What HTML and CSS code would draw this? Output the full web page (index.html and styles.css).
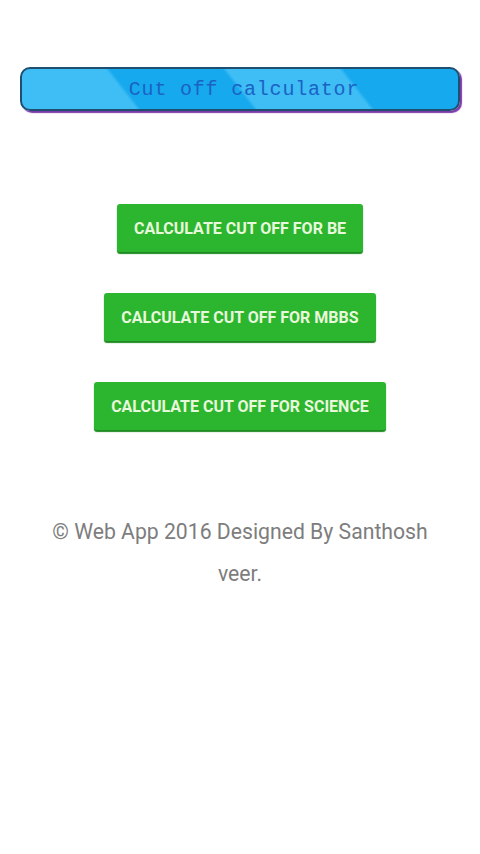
FILE: index.html
```html
<!DOCTYPE html>
<html lang="en">
<head>
<meta charset="UTF-8" />
<meta name="viewport" content="width=device-width, initial-scale=1" />
<title>Cut off calculator</title>
<link rel="stylesheet" href="styles.css">
</head>
<body>

<div class="header-bar">
  <h1>Cut off calculator</h1>
</div>

<div class="btn-list">
  <button class="calc-btn">Calculate cut off for BE</button>
  <button class="calc-btn">Calculate cut off for MBBS</button>
  <button class="calc-btn">Calculate cut off for Science</button>
</div>

<p class="footer">&copy; Web App 2016 Designed By Santhosh veer.</p>

</body>
</html>
```

FILE: styles.css
```css
  body {
    margin: 0;
    padding: 0;
    background-color: white;
    font-family: Roboto, "Liberation Sans", sans-serif;
  }
  .header-bar {
    margin: 67px 20px 0 20px;
    height: 40px;
    border: 2px solid #1f4f70;
    border-radius: 10px;
    box-shadow: 2px 2px 1px #7a3aa8;
    background: linear-gradient(52deg,
      #3fbdf5 0, #3fbdf5 24.5%,
      #16a9ee 25.5%, #16a9ee 49.5%,
      #3fbdf5 50.5%, #3fbdf5 74.5%,
      #16a9ee 75.5%);
    display: flex;
    align-items: center;
    justify-content: center;
    padding-left: 8px;
  }
  .header-bar h1 {
    margin: 0;
    font-family: "Liberation Mono", monospace;
    font-weight: normal;
    font-size: 20px;
    letter-spacing: 0.8px;
    color: #1a63c4;
  }
  .btn-list {
    display: flex;
    flex-direction: column;
    align-items: center;
    gap: 41px;
    margin-top: 93px;
  }
  .calc-btn {
    background-color: #2cb52e;
    border: none;
    border-radius: 3px;
    box-shadow: 0 2px 1px #1e8a22;
    height: 48px;
    padding: 0 17px;
    color: #e8f8dc;
    font-family: Roboto, "Liberation Sans", sans-serif;
    font-weight: bold;
    font-size: 16px;
    text-transform: uppercase;
    cursor: pointer;
  }
  .footer {
    margin: 81px auto 0 auto;
    max-width: 410px;
    text-align: center;
    color: #7d7d7d;
    font-size: 21.2px;
    line-height: 42px;
  }
```
